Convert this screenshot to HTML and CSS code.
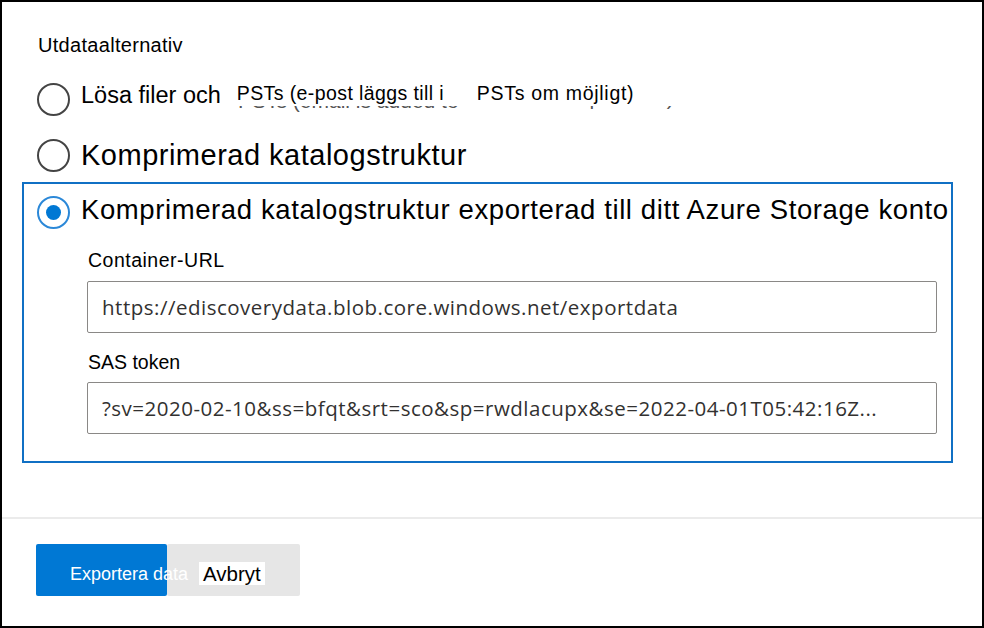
FILE: index.html
```html
<!DOCTYPE html>
<html lang="sv">
<head>
<meta charset="utf-8">
<title>Utdataalternativ</title>
<link rel="stylesheet" href="styles.css">
</head>
<body>
<div class="dialog">
  <div class="content">
    <div class="heading">Utdataalternativ</div>

    <div class="option opt1">
      <span class="radio"></span>
      <span class="label1">Lösa filer och</span>
      <span class="patch"><span class="tr1">PSTs (e-post läggs till i</span><span class="tr2">PSTs om möjligt)</span></span>
      <div class="ghost"><span>PSTs (email is added to</span><span class="ghost2">possible)</span></div>
    </div>

    <div class="option opt2">
      <span class="radio"></span>
      <span class="label2">Komprimerad katalogstruktur</span>
    </div>

    <div class="selected">
      <div class="option opt3">
        <span class="radio checked"></span>
        <span class="label3">Komprimerad katalogstruktur exporterad till ditt Azure Storage konto</span>
      </div>
      <div class="fields">
        <div class="field-label first">Container-URL</div>
        <div class="input">https://ediscoverydata.blob.core.windows.net/exportdata</div>
        <div class="field-label sas">SAS token</div>
        <div class="input">?sv=2020-02-10&amp;ss=bfqt&amp;srt=sco&amp;sp=rwdlacupx&amp;se=2022-04-01T05:42:16Z...</div>
      </div>
    </div>
  </div>

  <div class="footer">
    <button class="btn primary"><span class="btn-text">Exportera data</span></button>
    <button class="btn secondary"><span class="btn-patch">Avbryt</span></button>
  </div>
</div>
</body>
</html>
```

FILE: styles.css
```css
* {
  box-sizing: border-box;
  margin: 0;
  padding: 0;
}

html,
body {
  width: 984px;
  height: 628px;
  background: #ffffff;
  overflow: hidden;
}

body {
  font-family: "Liberation Sans", Arial, sans-serif;
  color: #000000;
}

.dialog {
  width: 984px;
  height: 628px;
  border: 2px solid #000000;
  display: flex;
  flex-direction: column;
}

.content {
  height: 515px;
  flex: none;
  padding: 32px 29px 0 20px;
}

.heading {
  font-size: 20px;
  line-height: 22px;
  letter-spacing: 0.3px;
  padding-left: 16px;
}

.option {
  display: flex;
  align-items: flex-start;
  height: 40px;
  padding-left: 15px;
  position: relative;
  white-space: nowrap;
}

.opt1 {
  margin-top: 23px;
}

.opt2 {
  margin-top: 16px;
}

.radio {
  flex: none;
  width: 33px;
  height: 33px;
  margin-top: 4px;
  margin-right: 11px;
  border: 2px solid #444444;
  border-radius: 50%;
  display: flex;
  align-items: center;
  justify-content: center;
}

.radio.checked {
  border-color: #2b88d8;
}

.radio.checked::after {
  content: "";
  width: 15px;
  height: 15px;
  border-radius: 50%;
  background: #0078d4;
}

.label1 {
  font-size: 23.5px;
  line-height: 27px;
  margin-top: 3px;
}

.patch {
  position: relative;
  z-index: 1;
  display: flex;
  width: 455px;
  height: 24px;
  margin-top: 3px;
  margin-left: 14px;
  padding-left: 2px;
  background: #ffffff;
  font-size: 19.5px;
  line-height: 22px;
  letter-spacing: 0.4px;
}

.tr1 {
  width: 240px;
  flex: none;
}

.tr2 {
  letter-spacing: 0.7px;
}

.ghost {
  position: absolute;
  left: 216px;
  top: 10px;
  font-size: 21px;
  line-height: 24px;
  color: #555555;
  display: flex;
  align-items: flex-start;
}

.ghost2 {
  margin-left: 131px;
  margin-top: -3px;
}

.label2 {
  font-size: 29px;
  line-height: 32px;
  letter-spacing: 0.5px;
  margin-top: 4px;
}

.selected {
  margin-top: 7px;
  height: 281px;
  border: 2px solid #1070c4;
  padding-top: 8px;
}

.opt3 {
  padding-left: 13px;
}

.label3 {
  font-size: 27.5px;
  line-height: 30px;
  letter-spacing: 0.6px;
  margin-top: 3px;
}

.fields {
  padding: 0 14px 0 63px;
}

.field-label {
  font-size: 19.5px;
  line-height: 22px;
  letter-spacing: 0.5px;
  padding-left: 1px;
  margin-top: 18px;
}

.field-label.first {
  margin-top: 17px;
}

.field-label.sas {
  letter-spacing: 0;
}

.input {
  margin-top: 9.5px;
  height: 52px;
  border: 1px solid #8a8886;
  border-radius: 2px;
  padding-left: 14px;
  font-family: "Open Sans", "Noto Sans", sans-serif;
  font-size: 20.5px;
  line-height: 50px;
  letter-spacing: 0.5px;
  color: #323130;
  white-space: nowrap;
  overflow: hidden;
}

.footer {
  flex: 1;
  border-top: 2px solid #ebebeb;
  padding: 25px 0 0 34px;
  display: flex;
  align-items: flex-start;
}

.btn {
  height: 52px;
  border: none;
  border-radius: 2px;
  display: flex;
  align-items: flex-start;
  font-family: "Liberation Sans", Arial, sans-serif;
  cursor: pointer;
}

.primary {
  width: 131px;
  background: #0078d4;
  color: #ffffff;
  padding: 20px 0 0 34px;
}

.btn-text {
  position: relative;
  z-index: 2;
  flex: none;
  white-space: nowrap;
  font-size: 18px;
  line-height: 21px;
}

.secondary {
  width: 133px;
  background: #e6e6e6;
  color: #000000;
  padding: 18px 0 0 32px;
}

.btn-patch {
  flex: none;
  background: #ffffff;
  padding: 1px 4px;
  font-size: 20.5px;
  line-height: 21px;
}
```
